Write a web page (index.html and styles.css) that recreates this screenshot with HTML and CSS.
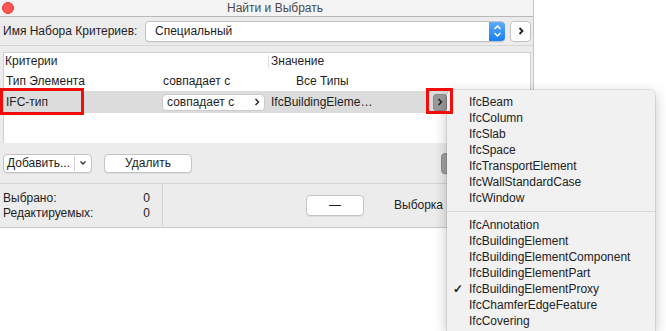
FILE: index.html
```html
<!DOCTYPE html>
<html lang="ru">
<head>
  <meta charset="UTF-8">
  <title>Найти и Выбрать</title>
  <link rel="stylesheet" href="styles.css">
</head>
<body>
  <div class="window">
    <div class="titlebar">
      <span class="close"></span>
      <span class="title">Найти и Выбрать</span>
    </div>

    <div class="set-row">
      <span class="set-label">Имя Набора Критериев:</span>
      <div class="select">
        <span class="select-text">Специальный</span>
        <span class="stepper">
          <svg width="9" height="14" viewBox="0 0 9 14"><path d="M1.5 5 L4.5 2 L7.5 5 M1.5 9 L4.5 12 L7.5 9" fill="none" stroke="#fff" stroke-width="1.5"/></svg>
        </span>
      </div>
      <div class="next-btn">
        <svg width="8" height="10" viewBox="0 0 8 10"><path d="M2.5 2 L5.5 5 L2.5 8" fill="none" stroke="#222" stroke-width="1.8"/></svg>
      </div>
    </div>

    <div class="table">
      <div class="thead">
        <div class="cell c1">Критерии</div>
        <div class="cell c2"></div>
        <div class="cell c3">Значение</div>
      </div>
      <div class="trow">
        <div class="cell c1">Тип Элемента</div>
        <div class="cell c2">совпадает с</div>
        <div class="cell c3"><span class="all-types">Все Типы</span></div>
      </div>
      <div class="trow selected">
        <div class="cell c1">IFC-тип</div>
        <div class="cell c2">
          <div class="popup">
            <span>совпадает с</span>
            <svg width="6" height="8" viewBox="0 0 6 8"><path d="M1.5 1 L4.5 4 L1.5 7" fill="none" stroke="#222" stroke-width="1.4"/></svg>
          </div>
        </div>
        <div class="cell c3">
          <span class="value">IfcBuildingEleme…</span>
          <span class="pick-btn">
            <svg width="6" height="8" viewBox="0 0 6 8"><path d="M1.5 1 L4.5 4 L1.5 7" fill="none" stroke="#222" stroke-width="1.5"/></svg>
          </span>
        </div>
      </div>
    </div>

    <div class="actions">
      <div class="btn split">
        <span class="split-main">Добавить...</span>
        <span class="split-arrow">
          <svg width="8" height="6" viewBox="0 0 8 6"><path d="M1.5 1.5 L4 4 L6.5 1.5" fill="none" stroke="#333" stroke-width="1.4"/></svg>
        </span>
      </div>
      <div class="btn remove">Удалить</div>
      <div class="btn hidden-btn"></div>
    </div>

    <div class="stats">
      <div class="counts">
        <div class="count-line"><span>Выбрано:</span><span>0</span></div>
        <div class="count-line"><span>Редактируемых:</span><span>0</span></div>
      </div>
      <div class="select-area">
        <div class="btn dash">—</div>
        <span class="select-label">Выборка</span>
      </div>
    </div>
  </div>

  <div class="menu">
    <div class="item">IfcBeam</div>
    <div class="item">IfcColumn</div>
    <div class="item">IfcSlab</div>
    <div class="item">IfcSpace</div>
    <div class="item">IfcTransportElement</div>
    <div class="item">IfcWallStandardCase</div>
    <div class="item">IfcWindow</div>
    <div class="sep"></div>
    <div class="item">IfcAnnotation</div>
    <div class="item">IfcBuildingElement</div>
    <div class="item">IfcBuildingElementComponent</div>
    <div class="item">IfcBuildingElementPart</div>
    <div class="item checked">IfcBuildingElementProxy</div>
    <div class="item">IfcChamferEdgeFeature</div>
    <div class="item">IfcCovering</div>
  </div>

  <div class="mark mark-type"></div>
  <div class="mark mark-pick"></div>
</body>
</html>
```

FILE: styles.css
```css
body {
  margin: 0;
  width: 666px;
  height: 331px;
  overflow: hidden;
  position: relative;
  background-color: #fff;
  font-family: "Liberation Sans", Arial, sans-serif;
  font-size: 12px;
  color: #1e1e1e;
}

.window {
  width: 533px;
  height: 227px;
  background-color: #ececec;
  border-right: 1px solid #c4c4c4;
  border-bottom: 1px solid #c8c8c8;
  display: flex;
  flex-direction: column;
}

.titlebar {
  height: 16px;
  background-color: #f4f4f4;
  border-bottom: 1px solid #b9b9b9;
  display: flex;
  align-items: center;
  justify-content: center;
  position: relative;
}

.close {
  position: absolute;
  left: 2px;
  top: 2px;
  width: 12px;
  height: 12px;
  border-radius: 50%;
  background-color: #fc5753;
  border: 1px solid #df3e3a;
  box-sizing: border-box;
}

.title {
  padding-left: 17px;
  color: #4a4a4a;
}

.set-row {
  height: 28px;
  display: flex;
  align-items: center;
  padding-left: 3px;
  border-bottom: 1px solid #d6d6d6;
}

.set-label {
  width: 142px;
  flex-shrink: 0;
  white-space: nowrap;
}

.select {
  width: 358px;
  height: 19px;
  background-color: #fff;
  border: 1px solid #c2c2c2;
  border-radius: 4px;
  display: flex;
  align-items: center;
  justify-content: space-between;
  box-shadow: 0 1px 0 rgba(0, 0, 0, 0.05);
}

.select-text {
  padding-left: 9px;
}

.stepper {
  width: 16px;
  height: 19px;
  margin-right: -1px;
  border-radius: 0 4px 4px 0;
  background: linear-gradient(#5fabfb, #177ef4);
  display: flex;
  align-items: center;
  justify-content: center;
}

.next-btn {
  width: 19px;
  height: 19px;
  margin-left: 5px;
  background-color: #fff;
  border: 1px solid #c2c2c2;
  border-radius: 4px;
  display: flex;
  align-items: center;
  justify-content: center;
}

.table {
  margin: 6px 2px 0 3px;
  height: 90px;
  background-color: #fff;
  border: 1px solid #d0d0d0;
  border-bottom: none;
}

.thead,
.trow {
  display: grid;
  grid-template-columns: 158px 106px 1fr;
  align-items: center;
}

.thead {
  height: 17px;
}

.thead .cell {
  border-left: 1px solid #e0e0e0;
  padding-left: 2px;
  line-height: 13px;
}

.thead .c1 {
  border-left: none;
  padding-left: 1px;
}

.trow {
  height: 21px;
}

.cell {
  padding-left: 1px;
  white-space: nowrap;
}

.trow .c1 {
  padding-left: 2px;
}

.all-types {
  padding-left: 27px;
}

.selected {
  background-color: #dcdcdc;
  height: 22px;
}

.selected .c2 {
  padding-left: 0;
}

.popup {
  width: 103px;
  height: 17px;
  background-color: #fff;
  border: 1px solid #cbcbcb;
  border-radius: 4px;
  display: flex;
  align-items: center;
  justify-content: space-between;
  padding: 0 4px;
  box-sizing: border-box;
}

.selected .c3 {
  display: flex;
  align-items: center;
  padding-left: 3px;
}

.value {
  width: 162px;
}

.pick-btn {
  width: 14px;
  height: 17px;
  border-radius: 3px;
  background-color: #9a9a9a;
  border: 1px solid #8a8a8a;
  box-sizing: border-box;
  display: flex;
  align-items: center;
  justify-content: center;
}

.actions {
  height: 40px;
  border-bottom: 1px solid #d2d2d2;
  display: flex;
  align-items: center;
  padding-left: 3px;
  gap: 12px;
}

.btn {
  height: 19px;
  background-color: #fff;
  border: 1px solid #c4c4c4;
  border-radius: 4px;
  box-sizing: border-box;
  display: flex;
  align-items: center;
  justify-content: center;
  box-shadow: 0 1px 0 rgba(0, 0, 0, 0.06);
}

.split {
  width: 89px;
  justify-content: flex-start;
}

.split-main {
  width: 71px;
  padding-left: 3px;
  box-sizing: border-box;
  border-right: 1px solid #d4d4d4;
  line-height: 15px;
}

.split-arrow {
  flex: 1;
  display: flex;
  justify-content: center;
}

.remove {
  width: 88px;
}

.hidden-btn {
  margin-left: 237px;
  width: 22px;
  height: 21px;
  background-color: #a3a3a3;
  border-color: #8e8e8e;
}

.stats {
  height: 42px;
  display: flex;
}

.counts {
  width: 159px;
  padding: 7px 0 0 3px;
  border-right: 1px solid #d2d2d2;
}

.count-line {
  display: flex;
  justify-content: space-between;
  padding-right: 12px;
  line-height: 15px;
}

.select-area {
  display: flex;
  align-items: center;
  padding-left: 143px;
}

.dash {
  width: 58px;
  height: 21px;
}

.select-label {
  margin-left: 30px;
}

.menu {
  position: absolute;
  left: 447px;
  top: 90px;
  width: 208px;
  height: 241px;
  background-color: #f1f1f1;
  border-radius: 5px 5px 0 0;
  box-shadow: 0 0 0 1px rgba(0, 0, 0, 0.08), 0 4px 14px rgba(0, 0, 0, 0.25);
  padding-top: 4px;
  box-sizing: border-box;
  overflow: hidden;
}

.item {
  height: 16px;
  line-height: 16px;
  padding-left: 22px;
  color: #222;
  position: relative;
  white-space: nowrap;
}

.checked::before {
  content: "✓";
  position: absolute;
  left: 6px;
  font-weight: bold;
}

.sep {
  height: 1px;
  background-color: #dadada;
  margin: 5px 0;
}

.mark {
  position: absolute;
  border: 3px solid #f20d0d;
  box-sizing: border-box;
}

.mark-type {
  left: 0;
  top: 88px;
  width: 84px;
  height: 27px;
}

.mark-pick {
  left: 426px;
  top: 88px;
  width: 27px;
  height: 26px;
}
```
